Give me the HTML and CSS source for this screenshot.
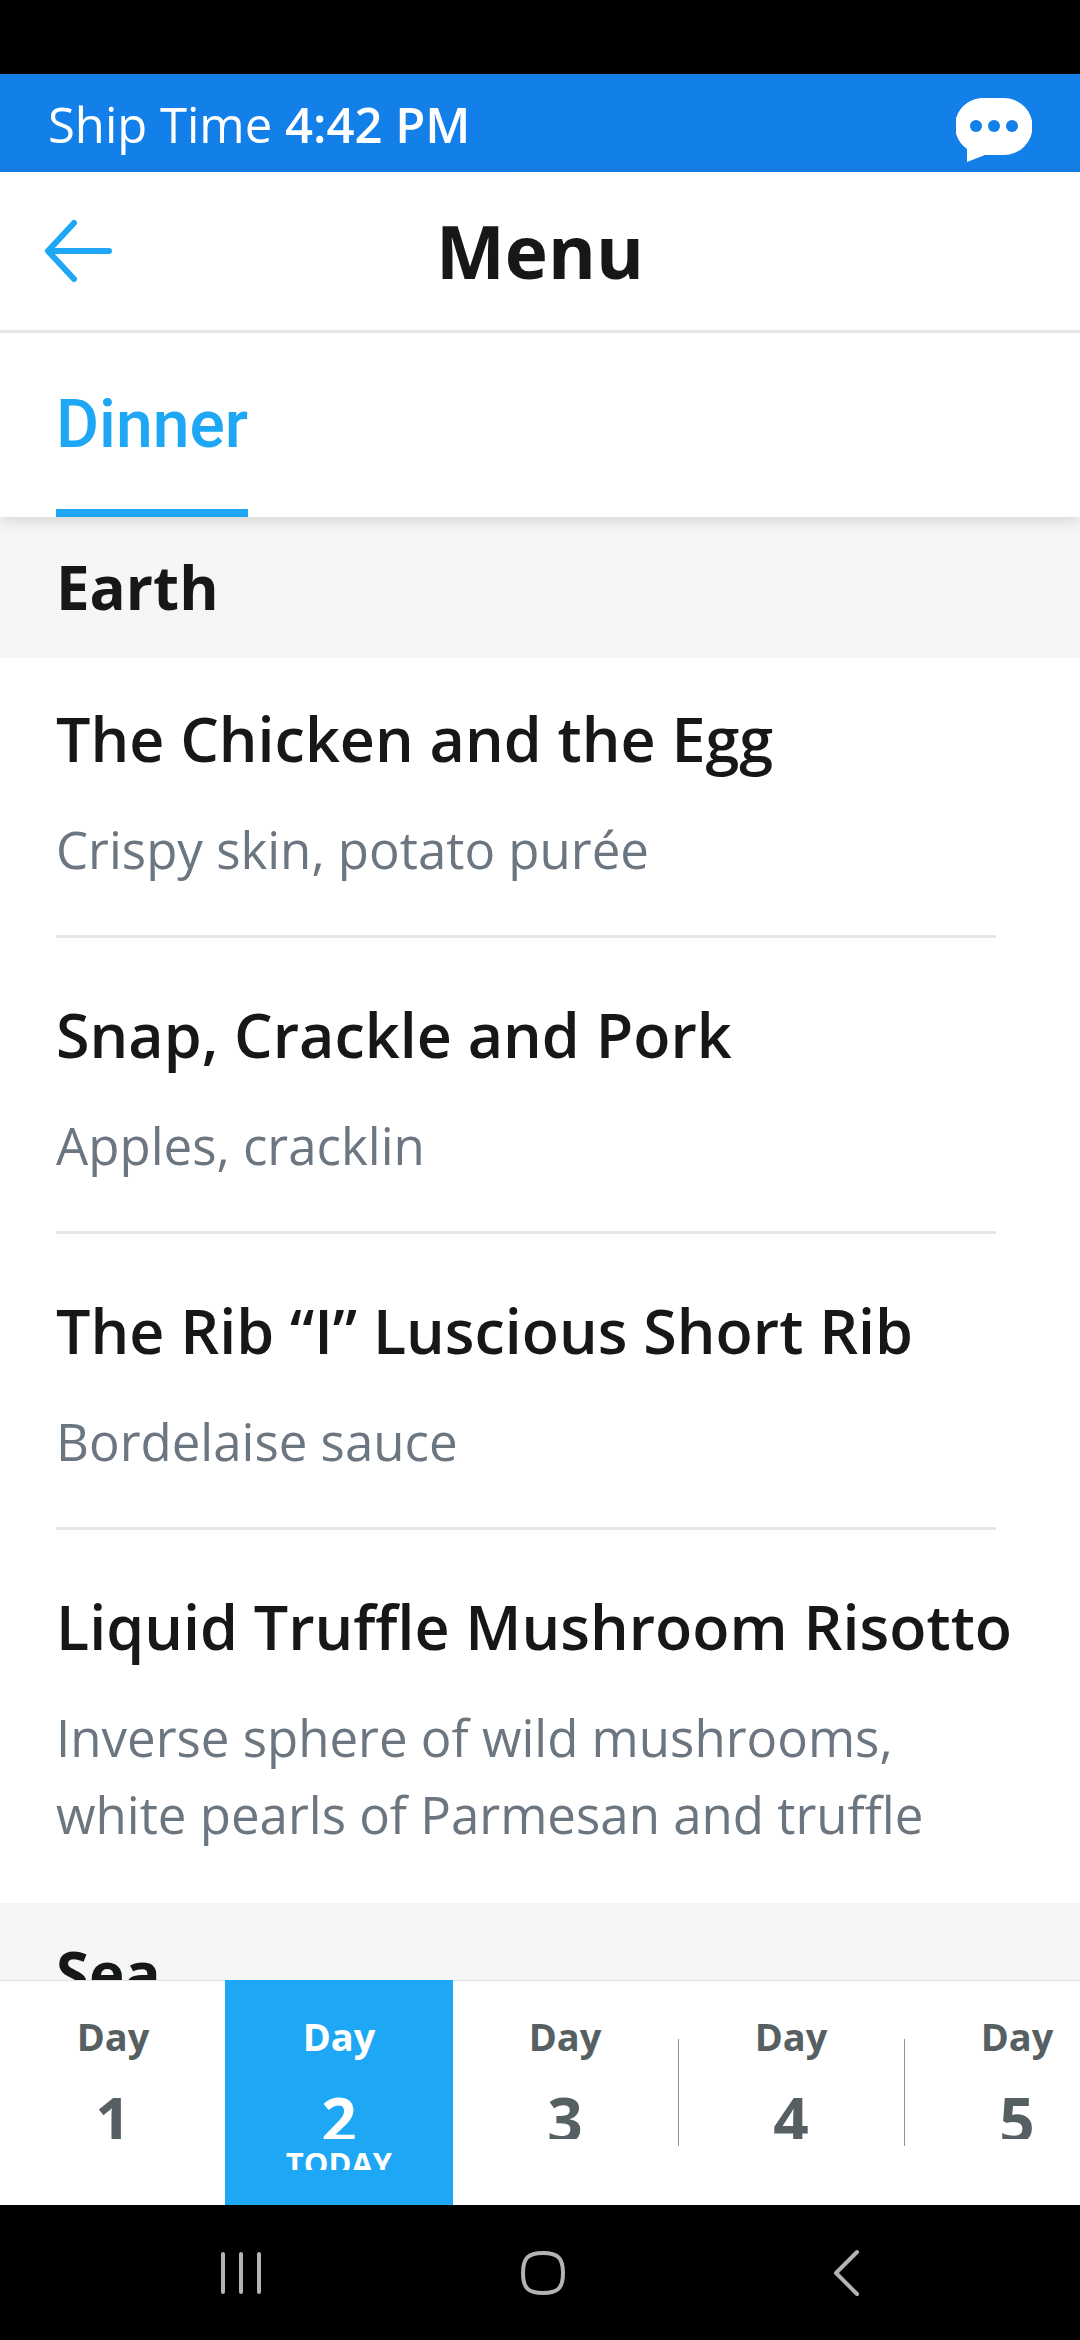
FILE: index.html
```html
<!doctype html>
<html lang="en">
	<head>
		<meta charset="UTF-8" />
		<meta name="viewport" content="width=device-width, initial-scale=1.0" />
		<title>Menu</title>
		<link rel="stylesheet" href="styles.css">
	</head>
	<body>
		<div class="status-bar"></div>

		<div class="ship-bar">
			<p class="ship-time">Ship Time <strong>4:42 PM</strong></p>
			<button class="icon-button" aria-label="Chat">
				<svg width="76" height="64" viewBox="0 0 76 64">
					<path d="M28 0H48A28 28 0 0 1 48 57H29L11 64V51A28 28 0 0 1 28 0Z" fill="#fff" />
					<g fill="#137fe9">
						<circle cx="20" cy="28" r="6" />
						<circle cx="38" cy="28" r="6" />
						<circle cx="56" cy="28" r="6" />
					</g>
				</svg>
			</button>
		</div>

		<header class="header">
			<button class="icon-button" aria-label="Back">
				<svg width="70" height="64" viewBox="0 0 70 64">
					<path d="M30 4L4 32L30 60M4 32H65" class="arrow" />
				</svg>
			</button>
			<h1 class="title">Menu</h1>
		</header>

		<nav class="tabs">
			<button class="tab active">Dinner</button>
		</nav>

		<main class="menu">
			<h2 class="section-title">Earth</h2>
			<ul class="dishes">
				<li class="dish">
					<h3 class="dish-name">The Chicken and the Egg</h3>
					<p class="dish-info">Crispy skin, potato purée</p>
				</li>
				<li class="dish">
					<h3 class="dish-name">Snap, Crackle and Pork</h3>
					<p class="dish-info">Apples, cracklin</p>
				</li>
				<li class="dish">
					<h3 class="dish-name">The Rib “I” Luscious Short Rib</h3>
					<p class="dish-info">Bordelaise sauce</p>
				</li>
				<li class="dish">
					<h3 class="dish-name">Liquid Truffle Mushroom Risotto</h3>
					<p class="dish-info">Inverse sphere of wild mushrooms, white pearls of Parmesan and truffle</p>
				</li>
			</ul>
			<h2 class="section-title">Sea</h2>
		</main>

		<div class="days">
			<button class="day">
				<span class="day-label">Day</span>
				<span class="day-number">1</span>
			</button>
			<button class="day active">
				<span class="day-label">Day</span>
				<span class="day-number">2</span>
				<span class="day-today">TODAY</span>
			</button>
			<button class="day">
				<span class="day-label">Day</span>
				<span class="day-number">3</span>
			</button>
			<button class="day divided">
				<span class="day-label">Day</span>
				<span class="day-number">4</span>
			</button>
			<button class="day divided">
				<span class="day-label">Day</span>
				<span class="day-number">5</span>
			</button>
		</div>

		<div class="system-nav">
			<button class="icon-button" aria-label="Recent apps">
				<svg width="48" height="48" viewBox="0 0 48 48">
					<path d="M6 5V43M24 5V43M42 5V43" />
				</svg>
			</button>
			<button class="icon-button" aria-label="Home">
				<svg width="48" height="48" viewBox="0 0 48 48">
					<path d="M24 4C39 4 44 9 44 24S39 44 24 44S4 39 4 24S9 4 24 4Z" />
				</svg>
			</button>
			<button class="icon-button" aria-label="Back">
				<svg width="48" height="48" viewBox="0 0 48 48">
					<path d="M36 3L15 24L36 45" />
				</svg>
			</button>
		</div>
	</body>
</html>
```
FILE: styles.css
```css
* {
	box-sizing: border-box;
}
body {
	margin: 0;
	height: 100vh;
	display: flex;
	flex-direction: column;
	overflow: hidden;
	background-color: #fff;
	color: #151718;
	font-family: "Open Sans", "Noto Sans", sans-serif;
}
h1,
h2,
h3,
p,
ul {
	margin: 0;
	padding: 0;
}
button {
	padding: 0;
	border: none;
	border-radius: 0;
	background: none;
	color: inherit;
	font-family: inherit;
	cursor: pointer;
}
svg {
	display: block;
	fill: none;
	stroke-linecap: round;
	stroke-linejoin: round;
}
.status-bar {
	flex: none;
	height: 74px;
	background-color: #000;
}
.ship-bar {
	flex: none;
	display: flex;
	justify-content: space-between;
	align-items: flex-start;
	padding: 0 48px;
	height: 98px;
	background: linear-gradient(#137fe9 90px, #137ae0);
	color: #fff;
}
.ship-bar .icon-button {
	padding-top: 24px;
}
.ship-time {
	font-size: 49px;
	line-height: 100px;
}
.ship-time strong {
	font-weight: 600;
}
.header {
	flex: none;
	display: grid;
	grid-template-columns: 1fr auto 1fr;
	align-items: center;
	padding: 0 44px;
	border-bottom: 3px solid #e6e6e6;
}
.header .icon-button {
	justify-self: start;
}
.arrow {
	stroke: #1ea7f4;
	stroke-width: 6;
}
.title {
	font-size: 73px;
	line-height: 158px;
	font-weight: 700;
}
.tabs {
	flex: none;
	display: flex;
	padding: 0 56px;
	position: relative;
	box-shadow: 0 0 18px rgba(0, 0, 0, 0.2);
	clip-path: inset(0 0 -24px 0);
	background-color: #fff;
}
.tab {
	padding: 52px 0 44px;
	border-bottom: 8px solid transparent;
	font-family: Roboto, sans-serif;
	font-size: 66px;
	line-height: 80px;
	font-weight: 500;
}
.tab.active {
	color: #1ea7f4;
	border-bottom-color: #1ea7f4;
}
.menu {
	flex: 1;
	min-height: 0;
	overflow: hidden;
}
.section-title {
	padding: 0 56px;
	background-color: #f5f7f7;
	font-size: 60px;
	line-height: 141px;
	font-weight: 700;
}
.dishes {
	list-style: none;
	padding: 0 84px 0 56px;
}
.dish {
	padding: 56px 0 47px;
	border-bottom: 3px solid #e6e6e6;
}
.dish:first-child {
	padding-top: 40px;
}
.dish:last-child {
	border-bottom-color: transparent;
}
.dish-name {
	font-size: 61px;
	line-height: 82px;
	font-weight: 600;
	white-space: nowrap;
}
.dish-info {
	margin-top: 31px;
	color: #6b7680;
	font-size: 51px;
	line-height: 77px;
}
.days {
	flex: none;
	display: flex;
	height: 225px;
	overflow: hidden;
	background-color: #fff;
	color: #566062;
	box-shadow: inset 0 1px #dfe3e3;
}
.day {
	position: relative;
	flex: 0 0 226px;
	display: flex;
	flex-direction: column;
	align-items: center;
	padding-top: 31px;
	font-weight: 700;
}
.day.active {
	background-color: #1ea7f4;
	color: #fff;
	box-shadow: 0 0 0 1px #1ea7f4;
}
.day.divided::before {
	content: "";
	position: absolute;
	left: 0;
	top: 59px;
	width: 1px;
	height: 107px;
	background-color: #8f9393;
}
.day-label {
	font-size: 38px;
	line-height: 50px;
}
/* number and today labels are cut short by their boxes */
.day-number {
	margin-top: 29px;
	height: 49px;
	overflow: hidden;
	font-size: 62px;
	line-height: 59px;
}
.day-today {
	margin-top: 9px;
	height: 22px;
	overflow: hidden;
	font-size: 31px;
	line-height: 30px;
}
.system-nav {
	flex: none;
	display: grid;
	grid-template-columns: repeat(3, 1fr);
	place-items: center;
	padding: 0 84px 0 90px;
	height: 135px;
	background-color: #000;
}
.system-nav svg {
	stroke: #b3b3b3;
	stroke-width: 4;
}
```
